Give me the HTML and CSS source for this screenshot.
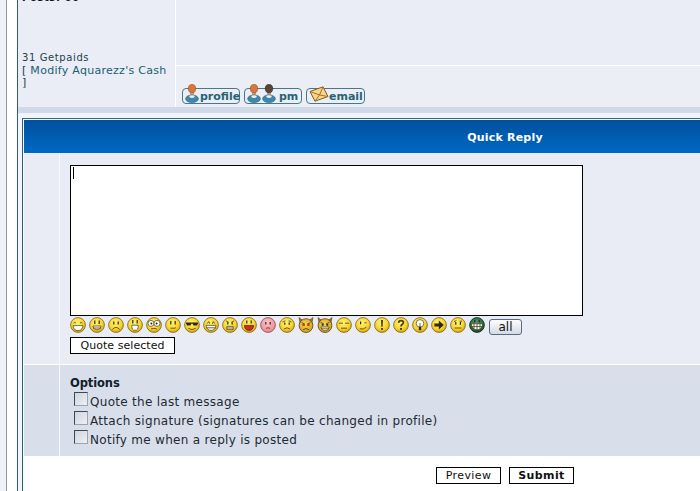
FILE: index.html
```html
<!DOCTYPE html>
<html lang="en">
<head>
    <meta charset="UTF-8">
    <title>Quick Reply</title>
    <link rel="stylesheet" href="styles.css">
</head>
<body>
    <svg class="defs" aria-hidden="true">
        <defs>
            <radialGradient id="yellow" cx="45%" cy="35%" r="70%">
                <stop offset="0" stop-color="#fff27a"/>
                <stop offset="0.6" stop-color="#f7d52e"/>
                <stop offset="1" stop-color="#cf9a0a"/>
            </radialGradient>
            <radialGradient id="pink" cx="45%" cy="35%" r="70%">
                <stop offset="0" stop-color="#ffc4c8"/>
                <stop offset="1" stop-color="#e8808c"/>
            </radialGradient>
            <radialGradient id="devil" cx="45%" cy="40%" r="70%">
                <stop offset="0" stop-color="#f8d84a"/>
                <stop offset="1" stop-color="#c8961e"/>
            </radialGradient>
            <radialGradient id="green" cx="45%" cy="35%" r="70%">
                <stop offset="0" stop-color="#4f9c70"/>
                <stop offset="1" stop-color="#0d4a2c"/>
            </radialGradient>
        </defs>
        <symbol id="s-biggrin" viewBox="0 0 16 16">
            <circle class="face" cx="8" cy="8" r="7.4"/>
            <path class="line" d="M3.600 6.200q1.200-1.600 2.400 0M10 6.200q1.200-1.600 2.400 0"/>
            <path class="teeth" d="M3 8.600h10q-.6 5-5 5t-5-5z"/>
        </symbol>
        <symbol id="s-smile" viewBox="0 0 16 16">
            <circle class="face" cx="8" cy="8" r="7.4"/>
            <path class="dark" d="M5.200 3.600h1.200v3.400H5.200zM9.600 3.600h1.200v3.400H9.600z"/>
            <path class="teeth" d="M3.800 9h8.400q-.6 3.800-4.200 3.800T3.800 9z"/>
            <path class="line" d="M4 11h8"/>
        </symbol>
        <symbol id="s-sad" viewBox="0 0 16 16">
            <circle class="face" cx="8" cy="8" r="7.4"/>
            <path class="dark" d="M5.200 4.400h1.200v3H5.200zM9.600 4.400h1.200v3H9.600z"/>
            <path class="line" d="M4.400 12.400q3.600-4 7.200 0"/>
        </symbol>
        <symbol id="s-surprised" viewBox="0 0 16 16">
            <circle class="face" cx="8" cy="8" r="7.4"/>
            <path class="dark" d="M5.200 3h1.200v3.600H5.200zM9.600 3h1.200v3.600H9.600z"/>
            <path class="teeth" d="M4.800 8.200h6.400q.4 5.200-3.200 5.200T4.800 8.200z"/>
        </symbol>
        <symbol id="s-eek" viewBox="0 0 16 16">
            <circle class="face" cx="8" cy="8" r="7.4"/>
            <circle class="eye" cx="5" cy="6.400" r="3"/>
            <circle class="eye" cx="11" cy="6.400" r="3"/>
            <circle class="pupil" cx="5.400" cy="6.400" r="1"/>
            <circle class="pupil" cx="10.600" cy="6.400" r="1"/>
            <path class="line" d="M5 12q3-1.400 6 0"/>
        </symbol>
        <symbol id="s-confused" viewBox="0 0 16 16">
            <circle class="face" cx="8" cy="8" r="7.4"/>
            <path class="dark" d="M5.200 4h1.200v3.600H5.200zM9.600 4h1.200v3.600H9.600z"/>
            <path class="line" d="M5.500 11.200h4.400l1-.6"/>
        </symbol>
        <symbol id="s-cool" viewBox="0 0 16 16">
            <circle class="face" cx="8" cy="8" r="7.4"/>
            <path class="dark" d="M2 5.400h12v1l-1 2.200H9.600L8.600 6.800H7.400l-1 1.800H3l-1-2.200z"/>
            <path class="line" d="M4.400 11.400q3.600 2.400 7.200 0"/>
        </symbol>
        <symbol id="s-lol" viewBox="0 0 16 16">
            <circle class="face" cx="8" cy="8" r="7.4"/>
            <path class="line" d="M3.800 6.600l2.200-2 .6 2.200M12.200 6.600l-2.200-2-.6 2.200"/>
            <path class="teeth" d="M3 8.400h10q-.6 5-5 5t-5-5z"/>
            <path class="line" d="M3.400 10.800h9.200"/>
        </symbol>
        <symbol id="s-mad" viewBox="0 0 16 16">
            <circle class="face" cx="8" cy="8" r="7.4"/>
            <path class="line" d="M3.800 3.800l3 1.600M12.200 3.800l-3 1.600"/>
            <path class="dark" d="M5.200 5.200h1.200v2.400H5.200zM9.600 5.200h1.200v2.400H9.600z"/>
            <path class="teeth" d="M4.800 9.400h6.400v3.200H4.800z"/>
            <path class="line" d="M4.800 11h6.400"/>
        </symbol>
        <symbol id="s-razz" viewBox="0 0 16 16">
            <circle class="face" cx="8" cy="8" r="7.4"/>
            <path class="dark" d="M5.200 3.400h1.200v3.200H5.200zM9.600 3.400h1.200v3.200H9.600z"/>
            <path class="tongue" d="M3.400 8.400h9.200q-.4 5-4.600 5t-4.600-5z"/>
        </symbol>
        <symbol id="s-blush" viewBox="0 0 16 16">
            <circle class="face-pink" cx="8" cy="8" r="7.4"/>
            <path class="dark" d="M5.200 5h1.200v2.600H5.200zM9.600 5h1.200v2.600H9.600z"/>
            <path class="line" d="M6 11.400q2-1.400 4 0"/>
        </symbol>
        <symbol id="s-worried" viewBox="0 0 16 16">
            <circle class="face" cx="8" cy="8" r="7.4"/>
            <path class="line" d="M3.600 5l2.800-1.200M12.400 5L9.600 3.800"/>
            <path class="dark" d="M5.200 5.400h1.200v2.400H5.200zM9.600 5.400h1.200v2.400H9.600z"/>
            <path class="line" d="M5 12q3-2.400 6 0"/>
        </symbol>
        <symbol id="s-evil" viewBox="0 0 16 16">
            <path class="horn" d="M1 .6l4 3-2.800 2.800zM15 .6l-4 3 2.800 2.800z"/>
            <circle class="face-devil" cx="8" cy="8.600" r="6.900"/>
            <path class="line" d="M3.600 5.600L7 7.200M12.400 5.600L9 7.200"/>
            <path class="red" d="M4.400 7h2.400v2H4.400zM9.200 7h2.400v2H9.200z"/>
            <path class="line" d="M4.800 12.800q3.200-2.600 6.400 0"/>
        </symbol>
        <symbol id="s-twisted" viewBox="0 0 16 16">
            <path class="horn" d="M1 .6l4 3-2.800 2.800zM15 .6l-4 3 2.800 2.800z"/>
            <circle class="face-devil" cx="8" cy="8.600" r="6.900"/>
            <path class="line" d="M3.600 5.400L7 7M12.400 5.400L9 7"/>
            <path class="dark" d="M4.800 7h1.800v1.800H4.800zM9.400 7h1.800v1.800H9.400z"/>
            <path class="teeth" d="M3.800 10h8.400q-.6 3.800-4.200 3.800T3.800 10z"/>
            <path class="line" d="M4.200 11.800h7.600"/>
        </symbol>
        <symbol id="s-rolleyes" viewBox="0 0 16 16">
            <circle class="face" cx="8" cy="8" r="7.4"/>
            <path class="line" d="M2.800 6.200h4.200M9 6.200h4.200M5 11.200h6"/>
        </symbol>
        <symbol id="s-wink" viewBox="0 0 16 16">
            <circle class="face" cx="8" cy="8" r="7.4"/>
            <path class="dark" d="M5 4.600h1.200v2.600H5z"/>
            <path class="line" d="M9.400 5.800h2.200M4.800 11.800q3.800 1 6.600-1.600"/>
        </symbol>
        <symbol id="s-exclaim" viewBox="0 0 16 16">
            <circle class="face" cx="8" cy="8" r="7.4"/>
            <path class="dark" d="M7.100 3h1.800l-.3 6.800H7.400zM7.100 11h1.800v1.800H7.100z"/>
        </symbol>
        <symbol id="s-question" viewBox="0 0 16 16">
            <circle class="face" cx="8" cy="8" r="7.4"/>
            <path class="line thick" d="M5.600 5.800Q5.800 3.600 8 3.600q2.400 0 2.400 2 0 1.300-1.300 1.900-1.100.6-1.100 2"/>
            <path class="dark" d="M7.100 11h1.800v1.800H7.100z"/>
        </symbol>
        <symbol id="s-idea" viewBox="0 0 16 16">
            <circle class="face" cx="8" cy="8" r="7.4"/>
            <circle class="eye" cx="8" cy="6.400" r="3.800"/>
            <path class="dark" d="M6.800 9.800h2.400v3.400H6.800z"/>
            <path class="line" d="M8 6v4"/>
        </symbol>
        <symbol id="s-arrow" viewBox="0 0 16 16">
            <circle class="face" cx="8" cy="8" r="7.4"/>
            <path class="dark" d="M3.400 6.400h4.400V3.600L12.800 8l-5 4.400V9.600H3.400z"/>
        </symbol>
        <symbol id="s-neutral" viewBox="0 0 16 16">
            <circle class="face" cx="8" cy="8" r="7.4"/>
            <path class="line" d="M4 4.600l2.400-1M9.600 4.200H12"/>
            <path class="dark" d="M5.200 5h1.200v2.800H5.200zM9.800 5H11v2.800H9.800z"/>
            <path class="line" d="M4.600 11h6.800"/>
        </symbol>
        <symbol id="s-mrgreen" viewBox="0 0 16 16">
            <circle class="face-green" cx="8" cy="8" r="7.400"/>
            <path class="dark" d="M5.200 3h1.200v2.600H5.200zM9.600 3h1.200v2.600H9.600z"/>
            <path class="teeth" d="M2.400 6.800h11.200q-.2 6-5.600 6T2.400 6.800z"/>
            <path class="line" d="M5 7v5M8 7v5.600M11 7v5M3 9.600h10"/>
        </symbol>
        <symbol id="i-person" viewBox="0 0 14 19">
            <path d="M5 8h4v4H5z" fill="#c9a27a"/>
            <ellipse cx="7" cy="4.600" rx="3.700" ry="4.200" fill="#d9773a" stroke="#9a4f20" stroke-width=".6"/>
            <ellipse cx="7" cy="14.800" rx="6.400" ry="3.800" fill="#3f86ad" stroke="#2a5f80" stroke-width=".6"/>
            <ellipse cx="7" cy="12.600" rx="2.800" ry="1.400" fill="#e8f2f8"/>
        </symbol>
        <symbol id="i-person-dark" viewBox="0 0 14 19">
            <path d="M5 8h4v4H5z" fill="#c9a27a"/>
            <ellipse cx="7" cy="4.600" rx="3.700" ry="4.200" fill="#5a4436" stroke="#2c2019" stroke-width=".6"/>
            <ellipse cx="7" cy="14.800" rx="6.400" ry="3.800" fill="#3f86ad" stroke="#2a5f80" stroke-width=".6"/>
            <ellipse cx="7" cy="12.600" rx="2.800" ry="1.400" fill="#e8f2f8"/>
        </symbol>
    </svg>

    <div class="page">
        <div class="frame">
            <div class="forum">
                <div class="post">
                    <div class="post-author">
                        <div class="stat-top">Posts: 66</div>
                        <div class="cash">31 Getpaids</div>
                        <div class="cash-link">[ <a href="#">Modify Aquarezz's Cash</a><br>]</div>
                    </div>
                    <div class="post-main">
                        <div class="post-body"></div>
                        <div class="post-actions">
                            <a class="pill pill-profile" href="#">
                                <svg class="pill-icon"><use href="#i-person"/></svg>profile
                            </a>
                            <a class="pill pill-pm" href="#">
                                <svg class="pill-icon"><use href="#i-person"/></svg><svg class="pill-icon"><use href="#i-person-dark"/></svg>pm
                            </a>
                            <a class="pill pill-email" href="#">
                                <svg class="mail-icon" viewBox="0 0 20 16">
                                    <path d="M1 5.500L14 .8l5 9.700-13 4.700z" fill="#f6d68c" stroke="#8a5a1c"/>
                                    <path d="M1 5.500l9.500 3.500 3.500-8.200M6 15.200l4.500-6.200 8.500 1.500" fill="none" stroke="#a8702a"/>
                                </svg>email
                            </a>
                        </div>
                    </div>
                </div>
                <div class="post-strip"></div>

                <div class="reply">
                    <div class="reply-head">Quick Reply</div>
                    <div class="reply-row">
                        <div class="side"></div>
                        <div class="compose">
                            <div class="editor"><span class="caret"></span></div>
                            <div class="smilies">
                                <svg class="smiley"><use href="#s-biggrin"/></svg>
                                <svg class="smiley"><use href="#s-smile"/></svg>
                                <svg class="smiley"><use href="#s-sad"/></svg>
                                <svg class="smiley"><use href="#s-surprised"/></svg>
                                <svg class="smiley"><use href="#s-eek"/></svg>
                                <svg class="smiley"><use href="#s-confused"/></svg>
                                <svg class="smiley"><use href="#s-cool"/></svg>
                                <svg class="smiley"><use href="#s-lol"/></svg>
                                <svg class="smiley"><use href="#s-mad"/></svg>
                                <svg class="smiley"><use href="#s-razz"/></svg>
                                <svg class="smiley"><use href="#s-blush"/></svg>
                                <svg class="smiley"><use href="#s-worried"/></svg>
                                <svg class="smiley"><use href="#s-evil"/></svg>
                                <svg class="smiley"><use href="#s-twisted"/></svg>
                                <svg class="smiley"><use href="#s-rolleyes"/></svg>
                                <svg class="smiley"><use href="#s-wink"/></svg>
                                <svg class="smiley"><use href="#s-exclaim"/></svg>
                                <svg class="smiley"><use href="#s-question"/></svg>
                                <svg class="smiley"><use href="#s-idea"/></svg>
                                <svg class="smiley"><use href="#s-arrow"/></svg>
                                <svg class="smiley"><use href="#s-neutral"/></svg>
                                <svg class="smiley"><use href="#s-mrgreen"/></svg>
                                <button class="btn-all" type="button">all</button>
                            </div>
                            <button class="btn btn-quote" type="button">Quote selected</button>
                        </div>
                    </div>
                    <div class="reply-row options-row">
                        <div class="side"></div>
                        <div class="options">
                            <div class="options-title">Options</div>
                            <label class="option"><input type="checkbox">Quote the last message</label>
                            <label class="option"><input type="checkbox">Attach signature (signatures can be changed in profile)</label>
                            <label class="option"><input type="checkbox">Notify me when a reply is posted</label>
                        </div>
                    </div>
                    <div class="submit-row">
                        <button class="btn btn-preview" type="button">Preview</button>
                        <button class="btn btn-submit" type="submit">Submit</button>
                    </div>
                </div>
            </div>
        </div>
    </div>
</body>
</html>
```

FILE: styles.css
```css
html, body {
    margin: 0;
    padding: 0;
    overflow: hidden;
    height: 100%;
}

body {
    background-color: #f0f2f8;
    font-family: "DejaVu Sans", Verdana, sans-serif;
    color: #1a1a1a;
}

.defs {
    display: block;
    width: 0;
    height: 0;
}

.face { fill: url(#yellow); stroke: #7a6618; stroke-width: 0.8; }
.face-pink { fill: url(#pink); stroke: #8a4a50; stroke-width: 0.8; }
.face-devil { fill: url(#devil); stroke: #5a3c10; stroke-width: 0.8; }
.face-green { fill: url(#green); stroke: #0a2c1a; stroke-width: 0.8; }
.line { fill: none; stroke: #4a3a10; stroke-width: 0.8; }
.thick { stroke-width: 1.7; }
.dark { fill: #33280a; }
.teeth { fill: #fff; stroke: #4a3a10; stroke-width: 0.7; }
.eye { fill: #fff; stroke: #4a3a10; stroke-width: 0.7; }
.pupil { fill: #222; }
.tongue { fill: #c8301c; stroke: #5a1808; stroke-width: 0.7; }
.red { fill: #c8401c; }
.horn { fill: #a87c28; stroke: #4a3410; stroke-width: 0.6; }

.page {
    width: 980px;
    min-height: 491px;
    padding-left: 6px;
}

.frame {
    border-left: 1px solid #8c9ba8;
    background-color: #fff;
    padding-left: 10px;
    min-height: 491px;
}

.forum {
    border-left: 1px solid #2f5f70;
    background-color: #f1f4fa;
    min-height: 491px;
}

/* post above the reply box, cut off by the top of the window */
.post {
    display: flex;
    height: 107px;
    background-color: #eaedf5;
    overflow: hidden;
}

.post-author {
    width: 153px;
    padding-left: 4px;
    border-right: 1px solid #fff;
    font-size: 10px;
    letter-spacing: 0.6px;
    line-height: 12px;
    color: #1f3f4c;
}

.stat-top {
    margin-top: -8px;
    height: 60px;
    font-weight: bold;
    color: #111;
}

.cash {
    height: 13px;
}

.cash-link {
    font-size: 11px;
    line-height: 12px;
    letter-spacing: 0.28px;
    white-space: nowrap;
}

.cash-link a {
    color: #186070;
    text-decoration: none;
}

.post-main {
    flex: 1;
    display: flex;
    flex-direction: column;
}

.post-body {
    height: 65px;
    border-bottom: 1px solid #fff;
}

.post-actions {
    flex: 1;
    display: flex;
    align-items: flex-start;
    gap: 4px;
    padding: 22px 0 0 6px;
    background-color: #ebeef5;
}

.pill {
    box-sizing: border-box;
    display: flex;
    align-items: center;
    height: 16px;
    width: 58px;
    padding-left: 2px;
    border: 1px solid #4a7688;
    border-radius: 4px;
    background-color: #e9eff5;
    color: #2a6274;
    font-size: 11px;
    font-weight: bold;
    text-decoration: none;
}

.pill-email {
    width: 59px;
}

.pill-icon {
    width: 14px;
    height: 19px;
    margin-top: -5px;
    margin-right: 1px;
    flex-shrink: 0;
}

.pill-pm .pill-icon + .pill-icon {
    margin-right: 3px;
}

.mail-icon {
    width: 20px;
    height: 16px;
    margin-top: -5px;
    flex-shrink: 0;
}

.post-strip {
    height: 6px;
    background-color: #d0d9e8;
    margin-bottom: 5px;
}

/* quick reply table */
.reply {
    margin-left: 4px;
    border-left: 1px solid #2f5f70;
    border-top: 1px solid #2f6a80;
    padding: 1px 0 0 1px;
    background-color: #f4fbfd;
}

.reply-head {
    height: 33px;
    line-height: 35px;
    text-align: center;
    color: #fff;
    font-size: 11px;
    font-weight: bold;
    letter-spacing: 0.2px;
    background: linear-gradient(#00509c, #0068c4);
    border-bottom: 1px solid #dff4fa;
}

.reply-row {
    display: flex;
    background-color: #e9ecf5;
    border-bottom: 1px solid #fff;
}

.side {
    width: 35px;
    flex-shrink: 0;
    border-right: 1px solid #f6f8fb;
}

.compose {
    padding: 11px 0 10px 10px;
}

.editor {
    box-sizing: border-box;
    width: 513px;
    height: 151px;
    padding: 1px 2px;
    background-color: #fff;
    border: 1px solid #000;
}

.caret {
    display: block;
    width: 1px;
    height: 12px;
    background-color: #000;
}

.smilies {
    display: flex;
    align-items: flex-start;
    gap: 3px;
    margin-top: 1px;
}

.smiley {
    width: 16px;
    height: 16px;
    flex-shrink: 0;
}

.btn-all {
    box-sizing: border-box;
    width: 33px;
    height: 16px;
    margin: 2px 0 0 1px;
    padding: 0;
    border: 1px solid #5a6a80;
    border-radius: 3px;
    background: linear-gradient(#fdfdfe, #d5dae4);
    font-family: inherit;
    font-size: 12px;
    line-height: 14px;
    color: #111;
}

.btn {
    box-sizing: border-box;
    height: 17px;
    padding: 0;
    border: 1px solid #000;
    background-color: #fff;
    font-family: inherit;
    font-size: 11px;
    line-height: 15px;
    letter-spacing: 0.4px;
    color: #111;
}

.btn-quote {
    display: block;
    width: 105px;
    margin-top: 2px;
    letter-spacing: 0.05px;
}

.btn-preview,
.btn-submit {
    width: 65px;
}

.btn-submit {
    font-weight: bold;
}

.options-row {
    background-color: #d9dfea;
    border-bottom: 0;
}

.options {
    padding: 9px 0 6px 10px;
    font-size: 12px;
    line-height: 19px;
    letter-spacing: 0.29px;
    color: #1d2a33;
}

.options-title {
    font-size: 11.5px;
    font-weight: bold;
    letter-spacing: -0.1px;
    color: #10202c;
}

.option {
    display: flex;
    align-items: flex-start;
    height: 19px;
}

.option input {
    appearance: none;
    box-sizing: border-box;
    width: 14px;
    height: 14px;
    margin: -1px 2px 0 4px;
    border: 1px solid #3c4a56;
    border-right-color: #9aa4b0;
    border-bottom-color: #9aa4b0;
    background: linear-gradient(135deg, #cfd5de, #eef0f4);
}

.submit-row {
    display: flex;
    justify-content: center;
    gap: 8px;
    padding-top: 11px;
    min-height: 30px;
    background-color: #fff;
}
```
